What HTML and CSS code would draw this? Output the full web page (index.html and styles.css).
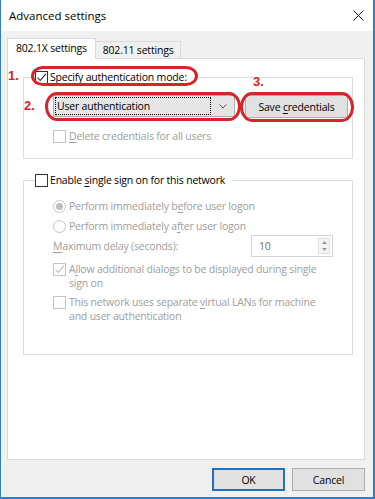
FILE: index.html
```html
<!DOCTYPE html>
<html lang="en">
<head>
  <title>Advanced settings</title>
  <meta charset="utf-8">
  <link rel="stylesheet" href="styles.css">
</head>
<body>
  <div class="window">
    <header class="titlebar">
      <span class="title">Advanced settings</span>
      <svg class="close" width="11" height="11" viewBox="0 0 11 11"><path d="M0.5 0.5L10.5 10.5M10.5 0.5L0.5 10.5" stroke="#1a1a1a" stroke-width="1" fill="none"/></svg>
    </header>

    <main class="content">
      <div class="tabs">
        <div class="tab tab-active">802.1X settings</div>
        <div class="tab">802.11 settings</div>
      </div>

      <div class="panel">
        <fieldset class="group group-auth">
          <legend class="legend">
            <span class="check">
              <svg width="11" height="11" viewBox="0 0 11 11"><path d="M1.5 5.5L4.2 8.5L9.8 1.8" stroke="#222" stroke-width="1.1" fill="none"/></svg>
            </span>
            <span><u>S</u>pecify authentication mode:</span>
          </legend>
          <div class="auth-row">
            <div class="select">
              <span class="select-value">User authentication</span>
              <svg class="chevron" width="8" height="5" viewBox="0 0 8 5"><path d="M0.5 0.5L4 4L7.5 0.5" stroke="#555" stroke-width="1" fill="none"/></svg>
            </div>
            <button class="button button-save">Save <u>c</u>redentials</button>
          </div>
          <div class="option option-off row-delete">
            <span class="check check-off"></span>
            <span><u>D</u>elete credentials for all users</span>
          </div>
        </fieldset>

        <fieldset class="group group-sso">
          <legend class="legend">
            <span class="check"></span>
            <span>Enable <u>s</u>ingle sign on for this network</span>
          </legend>
          <div class="option option-off row-first">
            <span class="radio radio-on"></span>
            <span>Perform immediately b<u>e</u>fore user logon</span>
          </div>
          <div class="option option-off row-next">
            <span class="radio"></span>
            <span>Perform immediately a<u>f</u>ter user logon</span>
          </div>
          <div class="delay-row option-off">
            <span><u>M</u>aximum delay (seconds):</span>
            <div class="spin">
              <span class="spin-value">10</span>
              <span class="spin-arrows">
                <svg width="5" height="3" viewBox="0 0 5 3"><path d="M2.5 0L5 3H0Z" fill="#9a9a9a"/></svg>
                <svg width="5" height="3" viewBox="0 0 5 3"><path d="M0 0H5L2.5 3Z" fill="#9a9a9a"/></svg>
              </span>
            </div>
          </div>
          <div class="option option-off option-wrap row-next">
            <span class="check check-off">
              <svg width="11" height="11" viewBox="0 0 11 11"><path d="M1.5 5.5L4.2 8.5L9.8 1.8" stroke="#b5b5b5" stroke-width="1.1" fill="none"/></svg>
            </span>
            <span>A<u>l</u>low additional dialogs to be displayed during single<br>sign on</span>
          </div>
          <div class="option option-off option-wrap row-next">
            <span class="check check-off"></span>
            <span>This network uses separate <u>v</u>irtual LANs for machine<br>and user authentication</span>
          </div>
        </fieldset>
      </div>

      <footer class="actions">
        <button class="button button-default">OK</button>
        <button class="button">Cancel</button>
      </footer>
    </main>

    <!-- hand-drawn annotations over the dialog -->
    <span class="ring ring-1"></span>
    <span class="ring ring-2"></span>
    <span class="ring ring-3"></span>
    <span class="num num-1">1.</span>
    <span class="num num-2">2.</span>
    <span class="num num-3">3.</span>
  </div>
</body>
</html>
```

FILE: styles.css
```css
*, *::before, *::after {
  margin: 0;
  padding: 0;
  box-sizing: border-box;
}

body {
  width: 375px;
  height: 499px;
  background-color: #FFFFFF;
  color: #000000;
  font-family: "Open Sans", sans-serif;
  font-size: 10.5px;
  letter-spacing: -0.2px;
}

u {
  text-decoration-thickness: 1px;
  text-underline-offset: 2px;
}

.window {
  position: relative;
  display: flex;
  flex-direction: column;
  width: 375px;
  height: 499px;
  border-left: 1px solid #2F7FCB;
  border-right: 2px solid #2F7FCB;
  border-bottom: 2px solid #2F7FCB;
  background-color: #F0F0F0;
}

.titlebar {
  display: flex;
  align-items: center;
  justify-content: space-between;
  height: 31px;
  padding: 0 9px 0 8px;
  background-color: #FFFFFF;
}

.title {
  font-size: 11.5px;
  letter-spacing: 0;
}

.content {
  flex: 1;
  display: flex;
  flex-direction: column;
  padding: 7px 8px 0 6px;
}

.tabs {
  position: relative;
  z-index: 1;
  display: flex;
  align-items: flex-end;
  height: 20px;
}

.tab {
  height: 17px;
  padding: 0 7px;
  border: 1px solid #D9D9D9;
  border-bottom: 0;
  border-left: 0;
  line-height: 16px;
}

.tab-active {
  height: 21px;
  margin-bottom: -1px;
  padding: 0 8px;
  border-left: 1px solid #D9D9D9;
  background-color: #FFFFFF;
  line-height: 19px;
}

.panel {
  flex: 1;
  padding: 11px 11px 0 15px;
  border: 1px solid #D9D9D9;
  background-color: #FFFFFF;
}

.group {
  min-width: 0;
  padding: 0 0 14px 11px;
  border: 1px solid #DCDCDC;
}

.group-sso {
  margin-top: 14px;
  padding-bottom: 31px;
}

.legend {
  display: flex;
  align-items: center;
  gap: 2px;
  height: 15px;
  padding-right: 6px;
  line-height: 15px;
}

.check {
  display: flex;
  align-items: center;
  justify-content: center;
  flex: none;
  width: 13px;
  height: 13px;
  border: 1px solid #333333;
  background-color: #FFFFFF;
}

.check-off {
  border-color: #C4C4C4;
}

.radio {
  display: flex;
  align-items: center;
  justify-content: center;
  flex: none;
  width: 13px;
  height: 13px;
  border: 1px solid #C4C4C4;
  border-radius: 50%;
}

.radio-on::after {
  content: "";
  width: 7px;
  height: 7px;
  border-radius: 50%;
  background-color: #BDBDBD;
}

.auth-row {
  display: flex;
  gap: 10px;
  margin: 10px 0 0 18px;
}

.select {
  display: flex;
  align-items: center;
  width: 182px;
  height: 22px;
  padding: 1px;
  border: 1px solid #ADADAD;
  background-color: #E5E5E5;
}

.select-value {
  flex: 1;
  height: 18px;
  padding-left: 1px;
  border: 1px dotted #000000;
  line-height: 16px;
}

.chevron {
  margin: 0 6px 0 8px;
}

.button {
  width: 73px;
  height: 23px;
  border: 1px solid #ADADAD;
  background-color: #E1E1E1;
  color: #000000;
  font-family: inherit;
  font-size: inherit;
  letter-spacing: inherit;
}

.button-save {
  width: 103px;
}

.button-default {
  border: 2px solid #1C73C4;
}

.option {
  display: flex;
  align-items: center;
  gap: 3px;
  height: 15px;
  margin-left: 18px;
  line-height: 15px;
}

.option-off {
  color: #9D9D9D;
}

.option-wrap {
  align-items: flex-start;
  height: auto;
  line-height: 14px;
}

.option-wrap .check {
  margin-top: 1px;
}

.row-delete {
  margin-top: 11px;
}

.row-first {
  margin-top: 11px;
}

.row-next {
  margin-top: 5px;
}

.delay-row {
  display: flex;
  align-items: center;
  justify-content: space-between;
  height: 22px;
  margin: 1px 0 0 18px;
  padding-right: 19px;
}

.spin {
  display: flex;
  align-items: center;
  width: 82px;
  height: 22px;
  padding: 2px;
  border: 1px solid #D4D4D4;
}

.spin-value {
  flex: 1;
  padding-left: 5px;
  color: #6D6D6D;
}

.spin-arrows {
  display: flex;
  flex-direction: column;
  align-items: center;
  justify-content: space-around;
  width: 12px;
  height: 16px;
  border: 1px solid #E0E0E0;
  background-color: #F4F4F4;
}

.actions {
  display: flex;
  justify-content: flex-end;
  gap: 7px;
  padding: 8px 0 6px;
}

.ring {
  position: absolute;
  border: 3px solid #D8232A;
  border-radius: 12px / 50%;
}

.ring-1 {
  left: 30px;
  top: 66px;
  width: 167px;
  height: 20px;
}

.ring-2 {
  left: 44px;
  top: 92px;
  width: 196px;
  height: 29px;
}

.ring-3 {
  left: 239px;
  top: 92px;
  width: 114px;
  height: 30px;
}

.num {
  position: absolute;
  color: #D8232A;
  font-family: "Liberation Sans", sans-serif;
  font-size: 13px;
  font-weight: bold;
  letter-spacing: 0;
}

.num-1 {
  left: 7px;
  top: 68px;
}

.num-2 {
  left: 23px;
  top: 98px;
}

.num-3 {
  left: 252px;
  top: 74px;
}
```
